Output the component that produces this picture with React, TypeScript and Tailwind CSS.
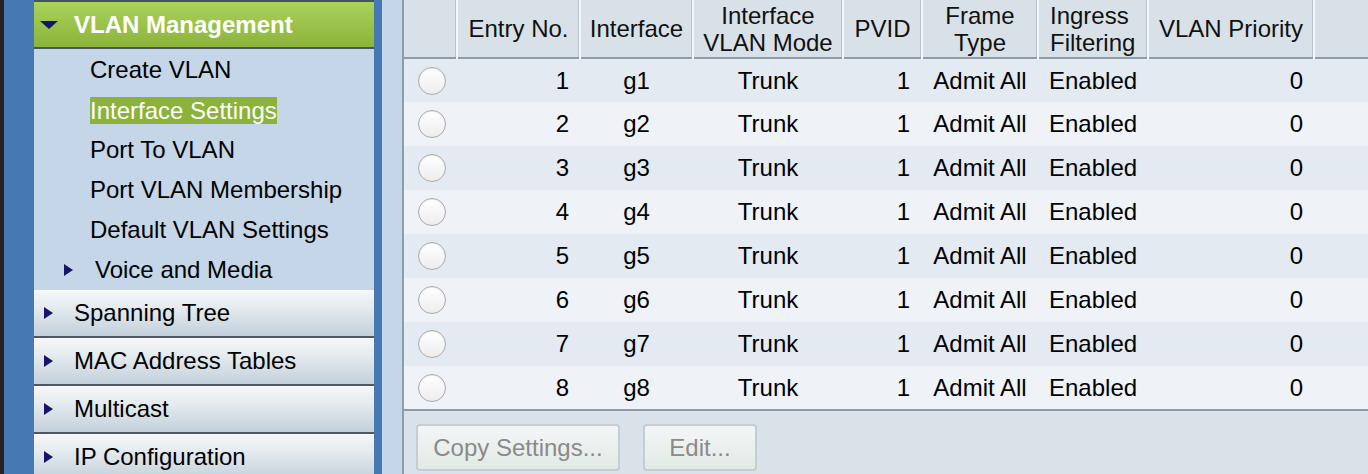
import React from "react"

type Port = {
  entry: number
  iface: string
  mode: string
  pvid: number
  frame: string
  ingress: string
  priority: number
}

const ports: Port[] = Array.from({ length: 8 }, (_, i) => ({
  entry: i + 1,
  iface: `g${i + 1}`,
  mode: "Trunk",
  pvid: 1,
  frame: "Admit All",
  ingress: "Enabled",
  priority: 0,
}))

const subItems = [
  "Create VLAN",
  "Interface Settings",
  "Port To VLAN",
  "Port VLAN Membership",
  "Default VLAN Settings",
]

const sections = ["Spanning Tree", "MAC Address Tables", "Multicast", "IP Configuration"]

function ArrowRight({ className = "" }: { className?: string }) {
  return (
    <svg width="9" height="12" viewBox="0 0 9 12" className={className}>
      <path d="M0 0 L9 6 L0 12 Z" fill="#15156a" />
    </svg>
  )
}

function ArrowDown() {
  return (
    <svg width="18" height="8" viewBox="0 0 18 8">
      <path d="M0 0 L18 0 L9 8 Z" fill="#15156a" />
    </svg>
  )
}

function Radio() {
  return (
    <span className="block h-[28px] w-[28px] rounded-full border border-[#a9a9a9] bg-gradient-to-b from-white to-[#ededed] shadow-[inset_0_1px_1px_rgba(0,0,0,0.08)]" />
  )
}

function Sidebar() {
  return (
    <aside className="flex w-[340px] shrink-0 flex-col">
      <div className="h-[2px] shrink-0 bg-[#46525d]" />
      <div className="flex h-[45px] shrink-0 items-center bg-gradient-to-b from-[#aad35b] to-[#8cb33a] pl-[6px]">
        <ArrowDown />
        <span className="ml-[16px] text-[24px] font-bold text-white">VLAN Management</span>
      </div>
      <div className="h-[2px] shrink-0 bg-[#4a5661]" />
      <div className="flex h-[241px] shrink-0 flex-col bg-[#c4d6e7] pt-[1px]">
        {subItems.map((item) => (
          <div key={item} className="flex h-[40px] shrink-0 items-center pl-[56px] text-[24px] text-black">
            {item === "Interface Settings" ? (
              <span className="bg-[#8bb23a] leading-[27px] text-white">{item}</span>
            ) : (
              <span>{item}</span>
            )}
          </div>
        ))}
        <div className="flex h-[40px] shrink-0 items-center pl-[30px] text-[24px] text-black">
          <ArrowRight />
          <span className="ml-[22px]">Voice and Media</span>
        </div>
      </div>
      {sections.map((s) => (
        <div key={s} className="flex shrink-0 flex-col">
          <div className="flex h-[46px] items-center bg-gradient-to-b from-[#f6f8f9] via-[#dfe6eb] to-[#c2d0db] pl-[10px] text-[24px] text-black">
            <ArrowRight />
            <span className="ml-[21px]">{s}</span>
          </div>
          <div className="h-[2px] bg-[#4c5964]" />
        </div>
      ))}
    </aside>
  )
}

const th =
  "border-r-2 border-r-[#f4f7fa] shadow-[inset_-1px_0_0_#b7c3cd] font-normal leading-[27px] text-[#111]"

function PortTable() {
  return (
    <table className="w-full table-fixed border-collapse text-[24px]">
      <colgroup>
        <col className="w-[53px]" />
        <col className="w-[123px]" />
        <col className="w-[113px]" />
        <col className="w-[150px]" />
        <col className="w-[79px]" />
        <col className="w-[116px]" />
        <col className="w-[110px]" />
        <col className="w-[166px]" />
        <col />
      </colgroup>
      <thead>
        <tr className="h-[58px] border-b-2 border-b-[#8d9ca7] bg-[#d9e1e8]">
          <th className={th} />
          <th className={th}>Entry No.</th>
          <th className={th}>Interface</th>
          <th className={th}>
            Interface
            <br />
            VLAN Mode
          </th>
          <th className={th}>PVID</th>
          <th className={th}>
            Frame
            <br />
            Type
          </th>
          <th className={`${th} text-left pl-[11px]`}>
            Ingress
            <br />
            Filtering
          </th>
          <th className={th}>VLAN Priority</th>
          <th className="font-normal" />
        </tr>
      </thead>
      <tbody>
        {ports.map((p, i) => (
          <tr
            key={p.entry}
            className={`h-[44px] text-black ${i % 2 === 0 ? "bg-[#e3eaf1]" : "bg-[#eff3f8]"} ${
              i === ports.length - 1 ? "border-b-2 border-b-[#8d9ca7]" : ""
            }`}
          >
            <td className="pl-[14px]">
              <Radio />
            </td>
            <td className="pr-[11px] text-right">{p.entry}</td>
            <td className="text-center">{p.iface}</td>
            <td className="text-center">{p.mode}</td>
            <td className="pr-[12px] text-right">{p.pvid}</td>
            <td className="text-center">{p.frame}</td>
            <td className="pl-[11px] text-left">{p.ingress}</td>
            <td className="pr-[11px] text-right">{p.priority}</td>
            <td />
          </tr>
        ))}
      </tbody>
    </table>
  )
}

function ActionButton({ label, width }: { label: string; width: string }) {
  return (
    <button
      disabled
      className={`${width} h-[47px] rounded-[4px] border-2 border-[#c6ccd1] bg-gradient-to-b from-[#f4f6f8] to-[#e1eae5] text-[24px] text-[#8a8a8a]`}
    >
      {label}
    </button>
  )
}

export default function App() {
  return (
    <div className="flex h-[474px] w-[1368px] overflow-hidden bg-[#d9e1e9] font-['Liberation_Sans',Arial,sans-serif]">
      <div className="w-[4px] shrink-0 bg-[#242424]" />
      <div className="w-[30px] shrink-0 bg-[#4679b1]" />
      <Sidebar />
      <div className="w-[8px] shrink-0 bg-[#4679b1]" />
      <div className="w-[20px] shrink-0 bg-[#c4d6e7]" />
      <main className="flex min-w-0 flex-1 flex-col border-l-2 border-l-[#8c9da8] bg-[#d9e1e9]">
        <PortTable />
        <div className="flex shrink-0 gap-[23px] pl-[12px] pt-[13px]">
          <ActionButton label="Copy Settings..." width="w-[204px]" />
          <ActionButton label="Edit..." width="w-[114px]" />
        </div>
      </main>
    </div>
  )
}
